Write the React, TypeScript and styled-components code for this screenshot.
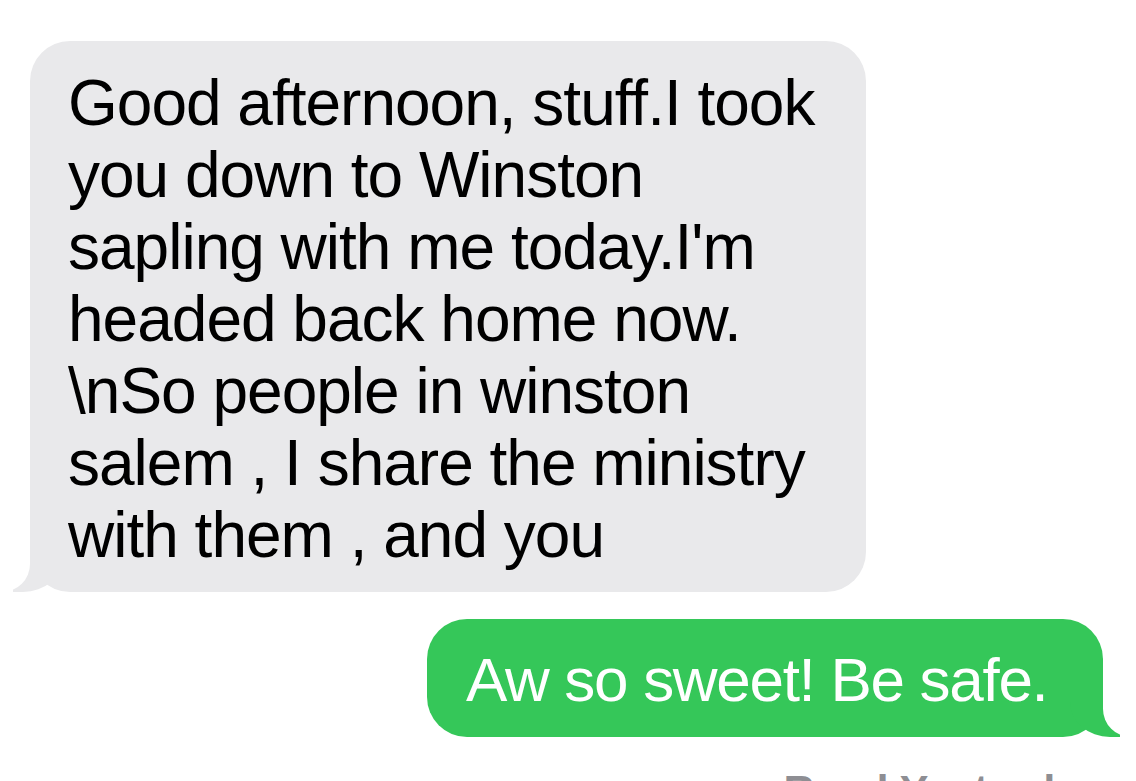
import React from 'react';
import styled, { createGlobalStyle } from 'styled-components';

const GlobalStyle = createGlobalStyle`
  html, body {
    margin: 0;
    padding: 0;
    background: #ffffff;
    overflow: hidden;
  }
  body {
    font-family: "Liberation Sans", Arial, sans-serif;
    -webkit-font-smoothing: antialiased;
  }
`;

const Thread = styled.div`
  display: flex;
  flex-direction: column;
  padding: 41px 33px 0 30px;
  width: 1136px;
  height: 781px;
  box-sizing: border-box;
`;

const Bubble = styled.div<{ $mine?: boolean }>`
  position: relative;
  align-self: ${(p) => (p.$mine ? 'flex-end' : 'flex-start')};
  box-sizing: border-box;
  width: ${(p) => (p.$mine ? '676px' : '836px')};
  padding: ${(p) => (p.$mine ? '25px 20px 21px 39px' : '26px 38px 21px 38px')};
  border-radius: 40px;
  background: ${(p) => (p.$mine ? '#35c759' : '#e9e9eb')};
  color: ${(p) => (p.$mine ? '#ffffff' : '#000000')};
  font-size: ${(p) => (p.$mine ? '62px' : '64px')};
  line-height: 72px;
  letter-spacing: ${(p) => (p.$mine ? '-1.3px' : '-1px')};
  white-space: ${(p) => (p.$mine ? 'nowrap' : 'normal')};
  margin-top: ${(p) => (p.$mine ? '27px' : '0')};

  &::before {
    content: '';
    position: absolute;
    bottom: 0;
    ${(p) => (p.$mine ? 'right: -17px;' : 'left: -17px;')}
    width: 50px;
    height: 50px;
    background: ${(p) => (p.$mine ? '#35c759' : '#e9e9eb')};
    ${(p) =>
      p.$mine
        ? 'border-bottom-left-radius: 40px 35px;'
        : 'border-bottom-right-radius: 40px 35px;'}
  }

  &::after {
    content: '';
    position: absolute;
    bottom: 0;
    ${(p) => (p.$mine ? 'right: -60px;' : 'left: -60px;')}
    width: 60px;
    height: 50px;
    background: #ffffff;
    ${(p) =>
      p.$mine
        ? 'border-bottom-left-radius: 28px;'
        : 'border-bottom-right-radius: 28px;'}
  }
`;

const Receipt = styled.div`
  align-self: flex-end;
  margin-top: 29px;
  margin-right: 0;
  font-size: 43px;
  line-height: 48px;
  font-weight: 700;
  color: #8e8e93;
  white-space: nowrap;
`;

export default function App() {
  return (
    <>
      <GlobalStyle />
      <Thread>
        <Bubble>
          Good afternoon, stuff.I took you down to Winston sapling with me
          today.I'm headed back home now. \nSo people in winston salem , I
          share the ministry with them , and you
        </Bubble>
        <Bubble $mine>Aw so sweet! Be safe.</Bubble>
        <Receipt>Read Yesterday</Receipt>
      </Thread>
    </>
  );
}
